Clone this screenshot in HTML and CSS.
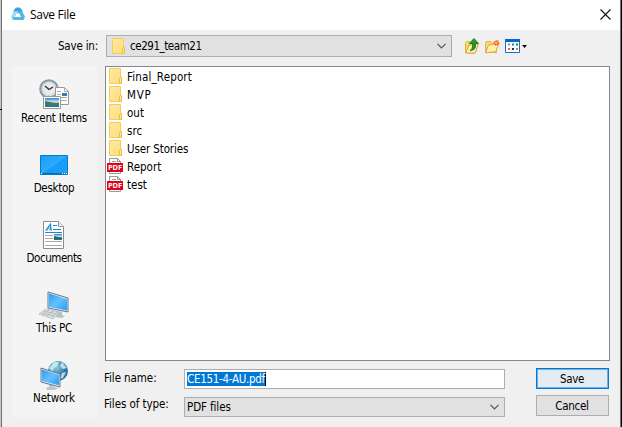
FILE: index.html
```
<!DOCTYPE html>
<html lang="en">
<head>
<meta charset="utf-8">
<title>Save File</title>
<link rel="stylesheet" href="styles.css">
</head>
<body>
<svg width="0" height="0" class="defs">
  <defs>
    <linearGradient id="fold" x2="1" y2="1"><stop stop-color="#ffe9a2"/><stop offset="1" stop-color="#ffdc78"/></linearGradient>
    <linearGradient id="screen" x2="1" y2="1"><stop stop-color="#1a9cf5"/><stop offset=".5" stop-color="#2eaaff"/><stop offset=".52" stop-color="#159cfb"/><stop offset="1" stop-color="#1ba1ff"/></linearGradient>
    <linearGradient id="monitor" x2="1" y2="1"><stop stop-color="#2b9ff0"/><stop offset=".5" stop-color="#65c0ff"/><stop offset="1" stop-color="#279df0"/></linearGradient>
    <radialGradient id="globe" cx=".4" cy=".3"><stop stop-color="#8fd0e8"/><stop offset="1" stop-color="#28769f"/></radialGradient>
    <linearGradient id="photo" x2="0" y2="1"><stop stop-color="#2b7fd0"/><stop offset=".45" stop-color="#d4eefa"/><stop offset=".6" stop-color="#4c8175"/><stop offset="1" stop-color="#246eac"/></linearGradient>
    <symbol id="folder" viewBox="0 0 16 16"><path d="M2.500.5h11v10h1v5h-12z" fill="url(#fold)" stroke="#efcd62"/><path d="M12.500 15.500v-5l1-1h1v6z" fill="#ffe592" stroke="#e9bf45"/></symbol>
    <symbol id="pdf" viewBox="0 0 16 16"><path d="M2.500.5h8l3 3v12h-11z" fill="#fff" stroke="#999"/><path d="M10.500.5v3h3M5 3.500h4" fill="none" stroke="#999"/><rect y="5" width="16" height="9" rx=".6" fill="#e2001a"/><text x="8" y="12" text-anchor="middle" class="pdf-label">PDF</text></symbol>
    <symbol id="open" viewBox="0 0 16 15"><path d="M1.500 13.500v-10l1-1h4l1 1.500h5v9.500z" fill="#f6da77" stroke="#dfb640"/><path d="M1.500 13.700 4.500 6l4.500-.5 1-1h5l-3.500 8.300z" fill="#fff0ae" stroke="#dba92f"/></symbol>
  </defs>
</svg>
<div class="window">
  <header class="titlebar">
    <svg class="logo" width="14" height="14" viewBox="0 0 14 14"><path d="M3.500 2 5.500.5h3l2 1.500 1.500 3.500-5 1-5-1z" fill="#35a7dc"/><path d="M2.500 4.500 7 4l-3 6 1 3H1.500L0 10z" fill="#a3dcf3"/><path d="m11 4.500 3 5-1.200 3.500H2.500l-.8-3H10L7 4z" fill="#52b9e5"/><path d="m7 5.500 2.600 4H4.400z" fill="#fff"/></svg>
    <span class="title">Save File</span>
    <svg class="close" width="11" height="11" viewBox="0 0 11 11"><path d="m.5.5 10 10m0-10-10 10" stroke="#111" stroke-width="1.100"/></svg>
  </header>
  <div class="toolbar">
    <label class="savein">Save in:</label>
    <div class="combo location"><svg width="16" height="16"><use href="#folder"/></svg><span class="t-loc">ce291_team21</span><svg class="chevron" width="9" height="6" viewBox="0 0 9 6"><path d="m.5.8 4 4 4-4" fill="none" stroke="#555" stroke-width="1.200"/></svg></div>
    <div class="tools">
      <svg width="14" height="16" viewBox="0 0 14 16"><path d="M.5 14.500v-10l1-1h3l1 1.500h6v8l-3 2.500z" fill="#f6da77" stroke="#dfb640"/><path d="m.8 15 3-8h3l1-1h5.500l-3 9z" fill="#fff0ae" stroke="#dba92f"/><path d="M5 12.500q3-1 2.500-7H4.300L9 .5l4.500 5h-3q1 7-5.500 7z" fill="#27962b" stroke="#146c18" stroke-width=".8"/></svg>
      <svg width="16" height="15"><use href="#open"/><path d="m12 .5 1 1.500 2-.8-.8 1.800 1.500 1-1.800.8.500 1.800-1.900-.6-1 1.300-.6-1.800-2-.2 1.400-1.300-.8-1.800 1.900.4z" fill="#ff5b25"/><circle cx="12.300" cy="3.900" r="1.200" fill="#ffc071"/></svg>
      <svg width="22" height="14" viewBox="0 0 22 14"><path d="M.5.5h14v13H.5z" fill="#fff" stroke="#0874d4"/><path d="M0 0h15v3H0z" fill="#0867c6"/><g><path d="M3 4.500h2v2H3z" fill="#8b8aa9"/><path d="M7 4.500h2v2H7z" fill="#078bc9"/><path d="M11 4.500h2v2h-2z" fill="#188a26"/><path d="M3 9h2v2H3z" fill="#f06643"/><path d="M7 9h2v2H7z" fill="#13318c"/><path d="M11 9h2v2h-2z" fill="#c28d0a"/></g><path d="M17 6h5l-2.500 3z" fill="#000"/></svg>
    </div>
  </div>
  <div class="main">
    <nav class="places">
      <div class="place"><svg width="32" height="32" viewBox="0 0 32 32"><circle cx="11" cy="10" r="8.800" fill="#d5dadd" stroke="#8f999f" stroke-width="2"/><circle cx="11" cy="10" r="6.700" fill="#e8eaeb" stroke="#a8b0b5" stroke-dasharray="1 2.500"/><path d="m7 7 4 3.500L15 8" fill="none" stroke="#333" stroke-width="1.400"/><path d="M17.500 8.500h9l4 4v13h-13z" fill="#fff" stroke="#999"/><path d="M26.500 8.500v4h4M19 12.500h4M19 15.500h4M19 18.500h10M19 21.500h10" fill="none" stroke="#aaa"/><path d="M24 14h5v3h-5z" fill="#337eae"/><path d="M5.500 17.500h17v12h-17z" fill="#fff" stroke="#999"/><path d="M7 19h14v9H7z" fill="url(#photo)"/><path d="m7 22 5 1 9 2v1H7z" fill="#467a53"/></svg><span class="t-recent">Recent Items</span></div>
      <div class="place"><svg width="32" height="32" viewBox="0 0 32 32"><path d="M2.500 6.500h27v19h-27z" fill="url(#screen)" stroke="#087abf"/><path d="M3 24h26v1H3z" fill="#096fae"/><path d="M3 24h1v1H3zM24 24h1v1h-1zM26 24h1v1h-1zM28 24h1v1h-1z" fill="#fff"/></svg><span class="t-desktop">Desktop</span></div>
      <div class="place"><svg width="32" height="32" viewBox="0 0 32 32"><path d="M5.500 2.500h15l5 5v22h-20z" fill="#fff" stroke="#8c8c8c"/><path d="M20.500 2.500v5h5" fill="#eee" stroke="#999"/><path d="M15 6.500h4M15 10.500h8M7 13.500h17" stroke="#1689cf"/><path d="m8 11 4.500-6 .5 6M9.500 9H13M7.500 11H10M11.500 11H14" fill="none" stroke="#1689cf" stroke-width="1.200"/><path d="M7 16.500h8M7 19.500h8M7 22.500h17M7 26.500h17" stroke="#aaa"/><path d="M16 15h8v6h-8z" fill="url(#photo)"/><path d="m16 17 8 2v1h-8z" fill="#35684e"/></svg><span class="t-documents">Documents</span></div>
      <div class="place"><svg width="32" height="32" viewBox="0 0 32 32"><path d="m19 22 5 1v3l3 1-3 2-7-1 2-2z" fill="#b9c1c6"/><path d="m10 3 20 6v14L10 19z" fill="#e0edf3" stroke="#667984"/><path d="m11 4.500 18 5.500v11.500L11 18z" fill="url(#monitor)"/><path d="m8 20 13 3-6 7-14-5z" fill="#dce0e3" stroke="#a9b0b4" stroke-width=".7"/><path d="m6 22 12 3M4 24l12 3m-5-6-6 5m10-4-6 5m10-4-5 5" stroke="#a9b0b4" stroke-width=".8"/></svg><span class="t-pc">This PC</span></div>
      <div class="place"><svg width="32" height="32" viewBox="0 0 32 32"><circle cx="20" cy="12" r="10" fill="url(#globe)"/><path d="m11 9 5-6 5 0-2 4-3 2-2 4zm13-6 5 6-4 1-3-3zm0 11 4-1-3 6-3 1z" fill="#d9f0f5" opacity=".8"/><path d="m11 25 5 1v2l4 1-3 2H9l-1-2 3-1z" fill="#bec5ca"/><path d="m3 9 19 6v13L3 23z" fill="#e0edf3" stroke="#667984"/><path d="m4 10.500 17 5.300v10.500L4 22z" fill="url(#monitor)"/></svg><span class="t-network">Network</span></div>
    </nav>
    <div class="content">
      <div class="list">
        <div class="file"><svg width="16" height="16"><use href="#folder"/></svg><span class="f1">Final_Report</span></div>
        <div class="file"><svg width="16" height="16"><use href="#folder"/></svg><span class="f2">MVP</span></div>
        <div class="file"><svg width="16" height="16"><use href="#folder"/></svg><span class="f3">out</span></div>
        <div class="file"><svg width="16" height="16"><use href="#folder"/></svg><span class="f4">src</span></div>
        <div class="file"><svg width="16" height="16"><use href="#folder"/></svg><span class="f5">User Stories</span></div>
        <div class="file"><svg width="16" height="16"><use href="#pdf"/></svg><span class="f6">Report</span></div>
        <div class="file"><svg width="16" height="16"><use href="#pdf"/></svg><span class="f7">test</span></div>
      </div>
      <div class="form">
        <div class="labels"><span class="l1">File name:</span><span class="l2">Files of type:</span></div>
        <div class="fields">
          <div class="input"><span class="selected">CE151-4-AU.pdf</span></div>
          <div class="combo type"><span class="t-type">PDF files</span><svg class="chevron" width="9" height="6" viewBox="0 0 9 6"><path d="m.5.8 4 4 4-4" fill="none" stroke="#555" stroke-width="1.200"/></svg></div>
        </div>
        <div class="buttons"><div class="button primary"><span>Save</span></div><div class="button"><span>Cancel</span></div></div>
      </div>
    </div>
  </div>
</div>
<div class="edge-mark"></div>
</body>
</html>
```
FILE: styles.css
```
* { box-sizing: border-box; }
body { margin: 0; width: 622px; height: 427px; overflow: hidden; background: #d8d8d8; color: #000; font: 11.5px/16px "DejaVu Sans Condensed", "DejaVu Sans", sans-serif; font-stretch: condensed; }
svg { display: block; flex: none; }
span, label { white-space: nowrap; }
.defs { position: absolute; }
.pdf-label { font: bold 7.5px "Open Sans", sans-serif; letter-spacing: -.1px; fill: #fff; }
.window { width: 622px; height: 427px; border-left: 1px solid #c8c8c8; border-right: 1px solid #000; background: #f0f0f0; box-shadow: inset 1px 0 #707070, inset -1px 0 #707070; }
.titlebar { height: 30px; display: flex; align-items: center; padding: 0 10px; margin: 0 1px; background: #fff; }
.logo { margin-right: 5px; margin-left: -1px; margin-top: -3px; }
.title { font: 12px/16px "Open Sans", sans-serif; letter-spacing: -.3px; }
.close { margin-left: auto; margin-top: -1px; margin-right: -1px; }
.toolbar { height: 36px; display: flex; padding: 5px 0 0 57px; }
.savein { width: 48px; padding-top: 3px; letter-spacing: -.2px; }
.combo { display: flex; align-items: center; border: 1px solid #adadad; background: #e1e1e1; }
.combo .chevron { margin-left: auto; }
.location { width: 346px; height: 22px; padding: 0 5px 0 3px; }
.location span { margin-left: 4px; letter-spacing: -.45px; }
.tools { display: flex; align-items: flex-start; gap: 5px; padding: 3px 0 0 13px; }
.tools svg:nth-child(n+2) { margin-top: 1px; }
.main { display: flex; padding-left: 11px; }
.places { width: 85px; height: 351px; background: #f4f4f4; padding-top: 13px; }
.place { height: 70px; display: flex; flex-direction: column; align-items: center; padding-right: 2px; }
.place svg { margin-bottom: -1px; }
.place span { margin-left: 1px; }
.t-recent { letter-spacing: -.15px; }
.t-desktop { letter-spacing: -.3px; }
.t-documents { letter-spacing: -.45px; }
.t-pc { letter-spacing: -.25px; }
.t-network { letter-spacing: -.2px; }
.content { margin-left: 8px; width: 505px; }
.list { height: 295px; border: 1px solid #828790; background: #fff; padding: 1px; }
.file { height: 18px; display: flex; gap: 4px; align-items: flex-start; }
.file span { padding-top: 1px; }
.f1 { letter-spacing: .15px; }
.f2 { letter-spacing: .8px; }
.f5 { letter-spacing: -.12px; }
.form { display: flex; padding-top: 7px; }
.labels { width: 79px; display: flex; flex-direction: column; gap: 10px; padding-top: 2px; margin-left: -1px; letter-spacing: -.08px; }
.fields { width: 322px; display: flex; flex-direction: column; gap: 8px; padding: 1px 0 0 1px; }
.input, .type { height: 20px; border: 1px solid #abadb3; padding: 2px; }
.input { background: #fff; display: flex; align-items: center; }
.selected { background: #0078d7; color: #fff; line-height: 14px; border-right: 1px solid #000; letter-spacing: -.3px; }
.type { padding: 0 5px 0 2px; letter-spacing: -.1px; }
.buttons { margin-left: 31px; display: flex; flex-direction: column; gap: 6px; letter-spacing: -.3px; }
.button { width: 73px; height: 21px; display: flex; align-items: center; justify-content: center; background: #e1e1e1; border: 1px solid #adadad; padding-right: 1px; }
.primary { background: #e5ebf3; border: 1px solid #0078d7; box-shadow: inset 0 0 0 1px #6eb2e8; }
.edge-mark { position: absolute; left: 0; top: 109px; width: 2px; height: 1px; background: #000; }
```
